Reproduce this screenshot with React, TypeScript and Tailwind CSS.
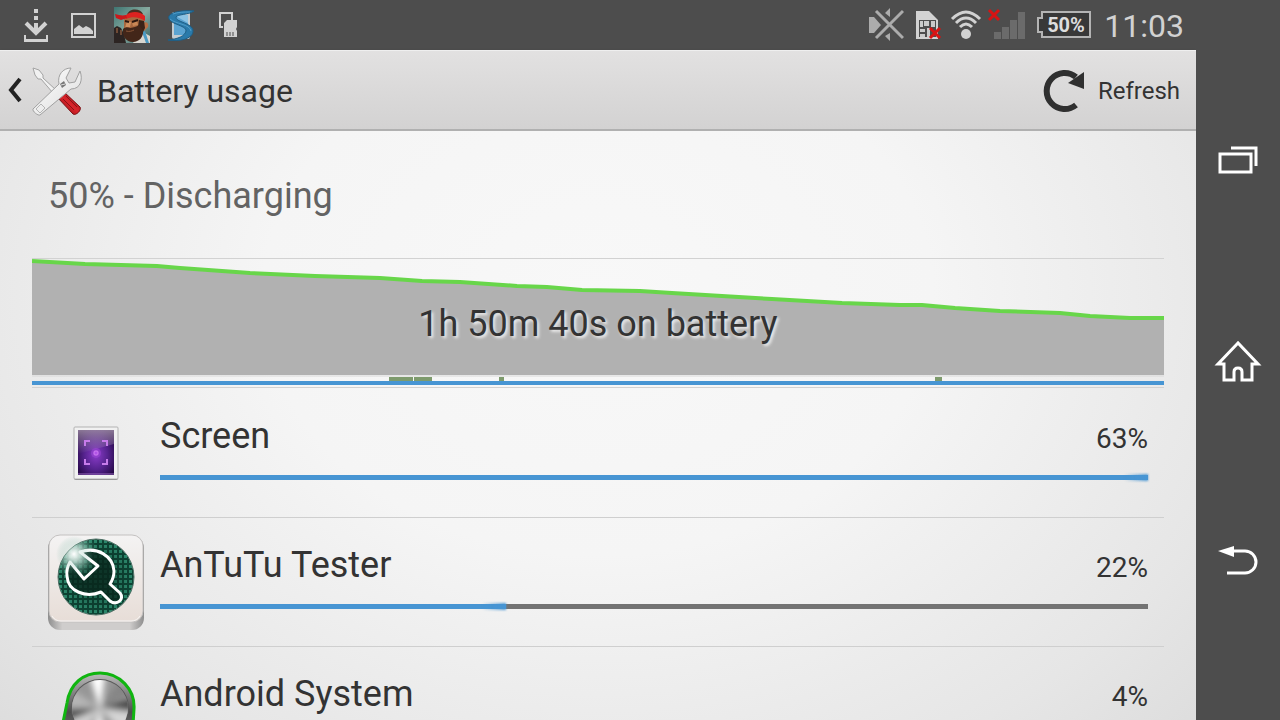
import { ReactNode } from "react"

type App = {
  name: string
  percent: number
  fill: number
  icon: ReactNode
}

const levels = [
  [0, 2], [53, 5], [125, 7], [148, 9], [218, 14], [283, 17], [348, 19], [390, 22],
  [428, 23], [485, 27], [515, 28], [550, 31], [608, 32], [640, 34], [690, 37],
  [740, 40], [810, 44], [868, 46], [890, 46], [923, 49], [968, 52], [1028, 54],
  [1058, 57], [1098, 59], [1132, 59],
]

function RedCross({ x, y }: { x: number; y: number }) {
  return (
    <path
      d={`M${x - 5} ${y - 5}l10 10m0 -10l-10 10`}
      stroke="#d81313"
      strokeWidth="3"
    />
  )
}

function DownloadIcon() {
  return (
    <svg viewBox="0 0 48 48" className="size-12" fill="none" stroke="#d2d2d2">
      <path d="M24 8v4m0 3v4m0 3v10" strokeWidth="4" />
      <path d="M14 22l10 10 10-10" strokeWidth="4" />
      <path d="M12 34h2v4h20v-4h2v7H12z" fill="#d2d2d2" stroke="none" />
    </svg>
  )
}

function PictureIcon() {
  return (
    <svg viewBox="0 0 48 48" className="size-12" fill="none">
      <rect x="12" y="13" width="23" height="23" stroke="#d2d2d2" strokeWidth="2" />
      <path d="M14 33v-5l5-4 4 3 3-2 4 2 3 3v3z" fill="#d2d2d2" />
    </svg>
  )
}

function AvatarIcon() {
  return (
    <svg viewBox="0 0 48 48" className="size-12">
      <defs>
        <linearGradient id="sea" x1="0" y1="0" x2="1" y2="1">
          <stop offset="0" stopColor="#3f7672" />
          <stop offset="0.5" stopColor="#86aaa0" />
          <stop offset="1" stopColor="#3a6163" />
        </linearGradient>
        <clipPath id="avatarClip">
          <rect x="6" y="6" width="36" height="36" />
        </clipPath>
      </defs>
      <g clipPath="url(#avatarClip)">
        <rect x="6" y="6" width="36" height="36" fill="url(#sea)" />
        <path d="M25 42l8-12 9 5v7z" fill="#d9d6cf" />
        <path d="M34 31l4 11h3l-4-12z" fill="#4b9ac4" />
        <path d="M6 27l3-2 4 2 3 6 2 9H6z" fill="#2c2422" />
        <path d="M9 27v5m4-3v5" stroke="#6f4a35" strokeWidth="2" />
        {/* Face */}
        <path d="M16 16l19-1 2 10-4 9-14 2-3-9z" fill="#a8683f" />
        <path d="M35 22c4-2 6 1 5 4l-4 4z" fill="#b77046" />
        <path d="M31 19l5 1 1 7-3 6-4-7z" fill="#3a2318" />
        <path d="M19 20l4 1-1 5-5 1z" fill="#cf8f5e" />
        <path d="M24 21l5-1 1 4-5 1z" fill="#c98756" />
        <path d="M17 20l4 1m3 0l6-2" stroke="#2b1710" strokeWidth="2" />
        {/* Beard */}
        <path d="M15 28c2-2 5-2 7-1 4-1 6-1 9-3l4 5c1 7-4 12-10 12-7 0-11-6-10-13z" fill="#432619" />
        <path d="M18 30c3 1 6 0 8-1" stroke="#8a5638" strokeWidth="1" fill="none" />
        {/* Headband */}
        <path d="M19 14c2-7 13-7 16-1z" fill="#4a2c20" />
        <path d="M18 14c5-4 14-4 19 1v5c-5-4-13-5-19-2z" fill="#dd2220" />
        <path d="M18 14c-4 1-7 0-11-1l1 4 5 2 6-2z" fill="#c9191b" />
      </g>
    </svg>
  )
}

function SonyIcon() {
  return (
    <svg viewBox="0 0 48 48" className="size-12" fill="none">
      <rect x="16" y="11" width="18" height="27" rx="2" fill="#c3ccd1" />
      <rect x="18" y="14" width="14" height="20" fill="#5ba4d2" />
      <path d="M18 14h14v8z" fill="#8cc3e3" />
      <path
        d="M38 10c-8-1-22 0-25 5-3 8 18 9 17 15-1 5-8 8-18 9 11 2 24-1 25-8 2-9-19-10-17-15 2-3 12-2 18-6z"
        fill="#2a7aaa"
        stroke="#1f5f86"
      />
      <path d="M14 18c5 5 20 5 21 12M17 13c5-2 11-2 17-2" stroke="#4f9cc8" />
    </svg>
  )
}

function StorageIcon() {
  return (
    <svg viewBox="0 0 48 48" className="size-12" fill="none">
      <path d="M19 26h-3V12h12v7" stroke="#d2d2d2" strokeWidth="2" />
      <path d="M23 19h10v7l-1 2 1 2v6H20V22z" fill="#d2d2d2" />
      <path d="M23 31v4m3-4v4m3-4v4" stroke="#4d4d4d" strokeWidth="1" />
    </svg>
  )
}

function MuteIcon() {
  return (
    <svg viewBox="0 0 36 36" className="size-9">
      <path d="M1 10h5l7 8-7 8H1z" fill="#acacac" />
      <path d="M17 6l5-5v9zM17 29l5-3v8z" fill="#acacac" />
      <path d="M8 4l27 27M35 4L8 31" stroke="#4d4d4d" strokeWidth="6" />
      <path d="M8 4l27 27M35 4L8 31" stroke="#acacac" strokeWidth="3" />
    </svg>
  )
}

function SimIcon() {
  return (
    <svg viewBox="0 0 30 36" className="h-9 w-[30px] overflow-visible">
      <path d="M4 4h13l9 9v19H4z" fill="#d2d2d2" />
      <path d="M7 13h17v17H7z" fill="#4d4d4d" />
      <path d="M8 14h3v6H8zM12 14h5v5h-5zM19 14h4v6h-4zM8 22h5v3H8zM8 27h5v3H8zM15 21h3v9h-3z" fill="#cacaca" />
      <RedCross x={23} y={26} />
    </svg>
  )
}

function WifiIcon() {
  return (
    <svg viewBox="0 0 32 36" className="h-9 w-8" fill="none" stroke="#d2d2d2" strokeWidth="3">
      <circle cx="16" cy="27" r="5" fill="#d2d2d2" stroke="none" />
      <path d="M2 12Q16 -2 30 12M6 16Q16 6 26 16M10 20Q16 14 22 20" />
    </svg>
  )
}

function SignalIcon() {
  return (
    <svg viewBox="0 0 36 36" className="size-9 overflow-visible">
      <path d="M4 25h7v7H4zM12 20h7v12h-7zM20 13h7v19h-7zM28 5h7v27h-7z" fill="#6b6b6b" />
      <RedCross x={4} y={8} />
    </svg>
  )
}

function BatteryIcon() {
  return (
    <svg viewBox="0 0 58 36" className="h-9 w-[58px]">
      <path d="M8 5h48v25H8v-5H4V11h4z" fill="#383838" stroke="#b4b4b4" strokeWidth="2" />
      <text x="32" y="25" textAnchor="middle" fill="#dedede" className="text-[20px] font-bold">
        50%
      </text>
    </svg>
  )
}

function ToolsIcon() {
  return (
    <svg viewBox="0 0 50 50" className="size-[50px]">
      <defs>
        <linearGradient id="redHandle" x1="0" y1="1" x2="1" y2="0">
          <stop offset="0" stopColor="#7e0a0e" />
          <stop offset="0.5" stopColor="#d9232a" />
          <stop offset="1" stopColor="#8d0d12" />
        </linearGradient>
        <linearGradient id="steel" x1="0" y1="0" x2="1" y2="1">
          <stop offset="0" stopColor="#ffffff" />
          <stop offset="1" stopColor="#dcdcdc" />
        </linearGradient>
      </defs>
      <path d="M1 2l6 2 4 5v3l13 12-3 3L9 13H6L3 9z" fill="#f1f1f1" stroke="#a3a3a3" />
      <path d="M25 31l6-6 17 16c2 3-4 9-7 7z" fill="url(#redHandle)" stroke="#7a1014" />
      <path d="M31 33l11 11m-8-14l11 11" stroke="#8a1217" />
      <path
        d="M1 43l26-25c-2-9 4-16 12-16l-5 10 3 5 6-1 5-11c3 8 1 18-9 18L8 49c-2 1-8-4-7-6z"
        fill="url(#steel)"
        stroke="#a0a0a0"
      />
      <path d="M4 43l5-5 4 4-5 5z" fill="#ededed" stroke="#b5b5b5" />
      <path d="M28 18l4-3 2 4-4 3z" fill="#777" />
      <path d="M29 19l4-1" stroke="#ddd" />
    </svg>
  )
}

function RefreshIcon() {
  return (
    <svg viewBox="0 0 48 48" className="size-12" fill="none">
      <path d="M36 38A18 18 0 1 1 36 10" stroke="#303030" strokeWidth="6" />
      <path d="M44 5v17l-16-6z" fill="#303030" />
    </svg>
  )
}

function ScreenIcon() {
  return (
    <svg viewBox="0 0 96 96" className="size-24">
      <defs>
        <radialGradient id="violet" cx="0.5" cy="0.55" r="0.65">
          <stop offset="0" stopColor="#8a3cc9" />
          <stop offset="0.5" stopColor="#56238f" />
          <stop offset="1" stopColor="#21063f" />
        </radialGradient>
        <linearGradient id="gloss" x1="0" y1="0" x2="0" y2="1">
          <stop offset="0" stopColor="#b9a8bd" stopOpacity="0.7" />
          <stop offset="1" stopColor="#b9a8bd" stopOpacity="0" />
        </linearGradient>
      </defs>
      <rect x="26" y="23" width="44" height="52" rx="2" fill="#7f7f7f" />
      <rect x="26" y="22" width="44" height="52" rx="1" fill="#f1f1f1" stroke="#b3b3b3" />
      <rect x="30" y="25" width="36" height="45" fill="url(#violet)" />
      <path d="M30 25h36v14l-36 10z" fill="url(#gloss)" />
      <path d="M30 69h36" stroke="#9a6ac0" />
      <path d="M37 41v-5h5M54 36h5v5M37 54v5h5M54 59h5v-5" stroke="#c77bea" strokeWidth="2" fill="none" />
      <circle cx="48" cy="48" r="5" fill="#9b45d6" opacity="0.6" />
      <rect x="46" y="46" width="4" height="4" rx="1" fill="#b254e6" stroke="#cf7df3" />
    </svg>
  )
}

function AntutuIcon() {
  return (
    <svg viewBox="0 0 96 96" className="size-24">
      <defs>
        <pattern id="mesh" width="5" height="5" patternUnits="userSpaceOnUse">
          <rect width="5" height="5" fill="#0d4434" />
          <rect x="1" y="1" width="3" height="3" fill="#2c8a6d" />
        </pattern>
        <radialGradient id="shine">
          <stop offset="0" stopColor="#ffffff" />
          <stop offset="0.3" stopColor="#d5e8e1" stopOpacity="0.75" />
          <stop offset="1" stopColor="#4f9d85" stopOpacity="0" />
        </radialGradient>
        <radialGradient id="shade">
          <stop offset="0.3" stopColor="#06231a" stopOpacity="0.5" />
          <stop offset="1" stopColor="#06231a" stopOpacity="0" />
        </radialGradient>
        <linearGradient id="tile" x1="0" y1="0" x2="0" y2="1">
          <stop offset="0" stopColor="#f4f3f3" />
          <stop offset="1" stopColor="#e7ddd7" />
        </linearGradient>
        <linearGradient id="tileBase">
          <stop offset="0" stopColor="#8e8e8e" />
          <stop offset="0.15" stopColor="#cfcdcc" />
          <stop offset="0.85" stopColor="#cfcdcc" />
          <stop offset="1" stopColor="#8e8e8e" />
        </linearGradient>
        <clipPath id="disc">
          <circle cx="48" cy="43" r="38" />
        </clipPath>
      </defs>
      <rect x="0" y="2" width="96" height="94" rx="12" fill="url(#tileBase)" />
      <rect x="1" y="1" width="94" height="87" rx="11" fill="url(#tile)" stroke="#c3c1c0" />
      <path d="M4 82q3 5 9 5h70q6 0 9-5" stroke="#f7f5f4" strokeWidth="1" fill="none" />
      <g clipPath="url(#disc)">
        <circle cx="48" cy="43" r="38" fill="url(#mesh)" />
        <circle cx="48" cy="43" r="38" fill="url(#shade)" />
        <circle cx="26" cy="20" r="24" fill="url(#shine)" />
      </g>
      <circle cx="48" cy="43" r="38" fill="none" stroke="#4c6f64" />
      <path
        d="M32 18C49 12 65 22 66 37Q66 44 62 50L72 59C77 65 69 72 62 67L53 58C38 64 20 58 19 42Q18 35 22 28L36 45 50 32z"
        fill="#08261d"
        fillOpacity="0.7"
        stroke="#ffffff"
        strokeWidth="3"
        strokeLinejoin="round"
      />
      <circle cx="26" cy="20" r="18" fill="url(#shine)" opacity="0.6" />
    </svg>
  )
}

function AndroidIcon() {
  return (
    <svg viewBox="0 0 96 96" className="size-24">
      <defs>
        <linearGradient id="metalRim" x1="0" y1="0" x2="0" y2="1">
          <stop offset="0" stopColor="#bdbdbd" />
          <stop offset="0.5" stopColor="#4d4d4d" />
          <stop offset="1" stopColor="#8a8a8a" />
        </linearGradient>
        <clipPath id="knob">
          <circle cx="52" cy="45" r="28" />
        </clipPath>
        <filter id="soften">
          <feGaussianBlur stdDeviation="3" />
        </filter>
      </defs>
      <path
        d="M12 74L19 40C22 20 36 10 52 10A34 34 0 0 1 86 46L84 78Q84 88 76 88H22Q10 88 12 74z"
        fill="url(#metalRim)"
        stroke="#10b510"
        strokeWidth="3"
      />
      <circle cx="52" cy="45" r="29" fill="#5a5a5a" />
      <g clipPath="url(#knob)">
        <rect x="24" y="17" width="56" height="56" fill="#969696" />
        <g filter="url(#soften)">
          <path d="M52 47L40 8h18z" fill="#ffffff" />
          <path d="M52 45L20 24v22z" fill="#b5b5b5" />
          <path d="M52 45L18 46v14z" fill="#4e4e4e" />
          <path d="M52 45L20 58l10 20z" fill="#d0d0d0" />
          <path d="M52 45l34-10v14z" fill="#4a4a4a" />
          <path d="M52 45l34 4-8 24z" fill="#d5d5d5" />
          <path d="M52 45l24-34 9 18z" fill="#858585" />
          <path d="M52 45L40 80h20z" fill="#f0f0f0" />
        </g>
      </g>
    </svg>
  )
}

const apps: App[] = [
  { name: "Screen", percent: 63, fill: 100, icon: <ScreenIcon /> },
  { name: "AnTuTu Tester", percent: 22, fill: 35, icon: <AntutuIcon /> },
  { name: "Android System", percent: 4, fill: 6, icon: <AndroidIcon /> },
]

function StatusBar() {
  return (
    <div className="flex h-[50px] shrink-0 items-center justify-between bg-[#4d4d4d] px-3">
      <div className="flex">
        <DownloadIcon />
        <PictureIcon />
        <AvatarIcon />
        <SonyIcon />
        <StorageIcon />
      </div>
      <div className="flex items-center gap-2">
        <MuteIcon />
        <SimIcon />
        <WifiIcon />
        <SignalIcon />
        <BatteryIcon />
        <time className="ml-1 pt-0.5 text-[32px] leading-9 text-[#d2d2d2]">11:03</time>
      </div>
    </div>
  )
}

function ActionBar() {
  return (
    <header className="flex h-[81px] shrink-0 items-center justify-between border-t border-b-2 border-t-[#efefef] border-b-[#b0b0b0] bg-linear-to-b from-[#e2e1e1] to-[#d3d2d2] pt-0.5 pr-4 pl-1.5 shadow-sm">
      <button type="button" aria-label="Navigate up" className="flex items-center">
        <svg viewBox="0 0 16 28" className="mr-2.5 h-7 w-4" fill="none">
          <path d="M14 2L5 13l9 11" stroke="#222" strokeWidth="4" />
        </svg>
        <ToolsIcon />
        <h1 className="ml-[15px] text-[32px] text-[#333]">Battery usage</h1>
      </button>
      <button type="button" className="flex items-center gap-2.5 text-[24px] text-[#333]">
        <RefreshIcon />
        Refresh
      </button>
    </header>
  )
}

function BatteryChart() {
  const line = levels.map(([x, y]) => `${x},${y}`).join(" ")

  return (
    <div className="relative border-y border-[#d2d2d2]">
      <svg viewBox="0 0 1132 128" preserveAspectRatio="none" className="block h-32 w-full">
        <polygon points={`0,116 ${line} 1132,116`} fill="#b1b1b1" />
        <polyline points={line} fill="none" stroke="#68d64a" strokeWidth="4" />
        <path d="M0 117h1132" stroke="#d8d8d8" />
        <path d="M357 118h24v4h-24zM382 118h18v4h-18zM467 118h5v4h-5zM903 118h7v4h-7z" fill="#7e9b6d" />
        <path d="M0 124h1132" stroke="#4795d3" strokeWidth="4" />
      </svg>
      <p className="absolute inset-x-0 top-[44px] text-center text-[36px] leading-[42px] text-[#333] [text-shadow:2px_2px_3px_#eee]">
        1h 50m 40s on battery
      </p>
    </div>
  )
}

function AppRow({ app }: { app: App }) {
  return (
    <li className="flex gap-4 border-b border-[#cfcfcf] p-4">
      {app.icon}
      <div className="flex-1 pt-[10px]">
        <div className="flex items-baseline justify-between text-[#333]">
          <span className="text-[36px] leading-[42px]">{app.name}</span>
          <span className="text-[28px] leading-8">{app.percent}%</span>
        </div>
        <div
          role="progressbar"
          aria-label={app.name}
          aria-valuenow={app.percent}
          className="mt-[18px] h-[5px] bg-[#737373]"
        >
          <div className="relative h-full bg-[#4795d3]" style={{ width: `${app.fill}%` }}>
            <div className="absolute -inset-y-px right-0 w-6 rounded-l-full bg-linear-to-r from-transparent to-[#4795d3] blur-[1px]"></div>
          </div>
        </div>
      </div>
    </li>
  )
}

function NavBar() {
  return (
    <nav className="flex w-[84px] shrink-0 flex-col bg-[#4d4d4d] py-[60px]">
      <button type="button" aria-label="Recent apps" className="flex flex-1 items-center justify-center">
        <svg viewBox="0 0 48 48" className="size-12" fill="none" stroke="#fff" strokeWidth="3">
          <rect x="6" y="18" width="31" height="18" />
          <path d="M17 12h25v18" />
        </svg>
      </button>
      <button type="button" aria-label="Home" className="flex flex-1 items-center justify-center">
        <svg viewBox="0 0 48 48" className="size-12" fill="none" stroke="#fff" strokeWidth="3">
          <path d="M24 7L4 28h6v16h10V36q0-4 4-4t4 4v8h10V28h6z" />
        </svg>
      </button>
      <button type="button" aria-label="Back" className="flex flex-1 items-center justify-center">
        <svg viewBox="0 0 48 48" className="size-12" fill="none" stroke="#fff" strokeWidth="3">
          <path d="M19 15h12a11 11 0 0 1 0 22H13" />
          <path d="M4 15l16-5v11z" fill="#fff" stroke="none" />
        </svg>
      </button>
    </nav>
  )
}

function App() {
  return (
    <div className="flex h-screen overflow-hidden font-[Roboto,sans-serif]">
      <div className="flex min-w-0 flex-1 flex-col">
        <StatusBar />
        <ActionBar />

        {/* Content */}
        <main className="min-h-0 flex-1 overflow-hidden bg-[radial-gradient(ellipse_70%_110%_at_50%_28%,#f8f8f8_0%,#f5f5f5_40%,#e6e6e6_80%,#dcdcdc_100%)] px-8">
          <h2 className="px-4 pt-[44px] pb-[41px] text-[36px] leading-[42px] text-[#636363]">
            50% - Discharging
          </h2>
          <BatteryChart />
          <ul className="pt-px">
            {apps.map((app) => (
              <AppRow key={app.name} app={app} />
            ))}
          </ul>
        </main>
      </div>
      <NavBar />
    </div>
  )
}

export default App
